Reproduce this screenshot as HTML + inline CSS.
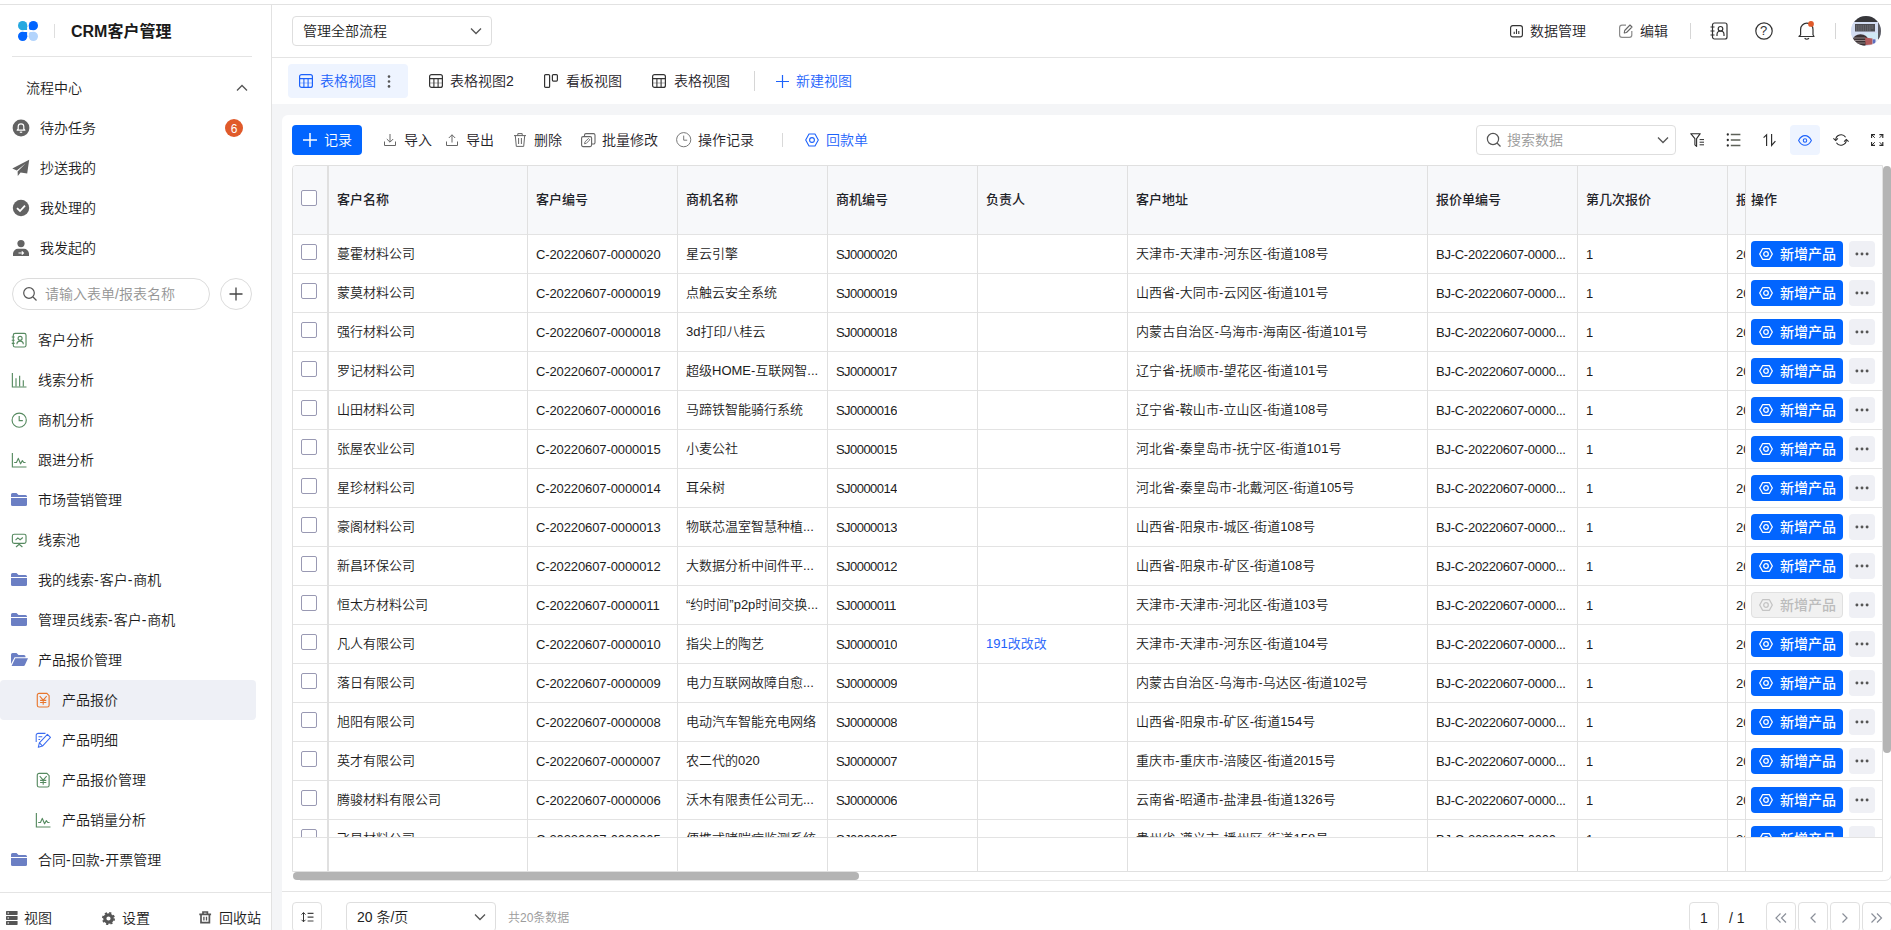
<!DOCTYPE html>
<html lang="zh-CN"><head><meta charset="utf-8"><title>CRM客户管理</title>
<style>
*{box-sizing:border-box;margin:0;padding:0}
html,body{width:1891px;height:930px;overflow:hidden;background:#fff}
body{font-family:"Liberation Sans","Noto Sans CJK SC",sans-serif;font-size:14px;color:#222;font-weight:350;position:relative;-webkit-font-smoothing:antialiased}
.abs{position:absolute}
.t{position:absolute;white-space:nowrap;line-height:20px;height:20px}
svg{position:absolute;overflow:visible}
#topline{left:0;top:4px;width:1891px;height:1px;background:#e2e2e2}
#side{left:0;top:5px;width:272px;height:925px;border-right:1px solid #e2e2e2;background:#fff}
#sidediv{left:12px;top:56px;width:240px;height:1px;background:#e4e4e4}
#hdr{left:272px;top:5px;width:1619px;height:53px;border-bottom:1px solid #e4e4e4;background:#fff}
#main{left:272px;top:104px;width:1619px;height:826px;background:#f4f5f7}
#card{left:282px;top:115px;width:1609px;height:815px;background:#fff;border-radius:6px 0 0 0}
.sel{position:absolute;border:1px solid #dedede;border-radius:4px;background:#fff}
.cb{position:absolute;width:16px;height:16px;border:1px solid #9999b3;border-radius:2px;background:#fff}
.vl{position:absolute;width:1px;background:#e0e0e0}
.hl{position:absolute;height:1px;background:#e3e3e3}
.cell{position:absolute;white-space:nowrap;font-size:13px;line-height:20px;height:20px;color:#1c1c1c;overflow:hidden}
.hc{position:absolute;white-space:nowrap;font-size:13px;line-height:20px;height:20px;color:#1f2329;font-weight:500}
.btn{position:absolute;height:26px;width:92px;background:#0265ff;border-radius:4px;color:#fff;font-size:14px}
.btn.dis{background:#f1f1f1;color:#bcbcbc;border:1px solid #e0e0e0}
.more{position:absolute;width:26px;height:26px;border-radius:4px;background:#eff0f5}
.pg{position:absolute;width:30px;height:30px;border:1px solid #e0e0e0;border-radius:4px;background:#fff}
</style></head>
<body>
<div class="abs" id="topline"></div>
<div class="abs" id="side"></div>
<div class="abs" id="sidediv"></div>
<div class="abs" id="hdr"></div>
<div class="abs" id="main"></div>
<div class="abs" id="card"></div>
<svg style="left:18px;top:21px" width="20" height="20" viewBox="0 0 20 20" ><circle cx="4.65" cy="4.65" r="4.65" fill="#25a8e0"/><rect x="4.65" y="4.65" width="4.45" height="4.45" rx="0.7" fill="#25a8e0"/><circle cx="15.35" cy="4.65" r="4.65" fill="#0265ff"/><rect x="10.9" y="4.65" width="4.45" height="4.45" rx="2" fill="#0265ff"/><circle cx="4.65" cy="15.35" r="4.65" fill="#0265ff"/><rect x="4.65" y="10.9" width="4.45" height="4.45" rx="0.7" fill="#0265ff"/><circle cx="15.35" cy="15.35" r="4.65" fill="#b3d4fc"/><rect x="10.9" y="10.9" width="4.45" height="4.45" rx="1.6" fill="#b3d4fc"/></svg>
<div class="abs" style="left:54px;top:24px;width:1px;height:14px;background:#dedede"></div>
<div class="t" style="left:71px;top:22px;font-size:16px;color:#1a1a1a;font-weight:bold;">CRM客户管理</div>
<div class="t" style="left:26px;top:78px;font-size:14px;color:#1c1c1c;">流程中心</div>
<svg style="left:236px;top:84px" width="12" height="8" viewBox="0 0 12 8" ><path d="M1 6.5 L6 1.5 L11 6.5" fill="none" stroke="#555" stroke-width="1.3"/></svg>
<div class="t" style="left:40px;top:118px;font-size:14px;color:#1c1c1c;">待办任务</div>
<svg style="left:12px;top:119px" width="18" height="18" viewBox="0 0 18 18" ><circle cx="9" cy="9" r="8.4" fill="#636363"/><path d="M5.2 11.2 H12.8 L11.8 10 V7.6 A2.8 2.8 0 0 0 6.2 7.6 V10 Z" fill="none" stroke="#fff" stroke-width="1.2" stroke-linejoin="round"/><path d="M7.8 13.2 H10.2" stroke="#fff" stroke-width="1.2"/></svg>
<div class="t" style="left:40px;top:158px;font-size:14px;color:#1c1c1c;">抄送我的</div>
<svg style="left:12px;top:159px" width="18" height="18" viewBox="0 0 18 18" ><path d="M17.2 0.8 L0.3 9.6 L4.8 11.6 L13.5 4.6 L5.6 12.4 L5.8 17 L8.6 13.4 L15.2 14.6 Z" fill="#636363"/></svg>
<div class="t" style="left:40px;top:198px;font-size:14px;color:#1c1c1c;">我处理的</div>
<svg style="left:12px;top:199px" width="18" height="18" viewBox="0 0 18 18" ><circle cx="9" cy="9" r="8.2" fill="#636363"/><path d="M5 9.2 L8 12 L13 6.6" fill="none" stroke="#fff" stroke-width="1.8"/></svg>
<div class="t" style="left:40px;top:238px;font-size:14px;color:#1c1c1c;">我发起的</div>
<svg style="left:12px;top:239px" width="18" height="18" viewBox="0 0 18 18" ><circle cx="9" cy="4.6" r="3.6" fill="#636363"/><path d="M1 17 V14.5 A5 5 0 0 1 6 9.8 H12 A5 5 0 0 1 17 14.5 V17 Z" fill="#636363"/><path d="M6.5 14 H11.5 M9.8 12.3 L11.5 14 L9.8 15.7" fill="none" stroke="#fff" stroke-width="1.1"/></svg>
<div class="abs" style="left:225px;top:119px;width:18px;height:18px;border-radius:9px;background:#e05a2a;color:#fff;font-size:12px;line-height:20px;text-align:center;font-weight:400">6</div>
<div class="abs" style="left:12px;top:278px;width:198px;height:32px;border:1px solid #dcdcdc;border-radius:16px;background:#fff"></div>
<svg style="left:22px;top:286px" width="16" height="16" viewBox="0 0 16 16" ><circle cx="7" cy="7" r="5.3" fill="none" stroke="#555" stroke-width="1.2"/><path d="M11 11 L14.5 14.5" stroke="#555" stroke-width="1.2"/></svg>
<div class="t" style="left:45px;top:284px;font-size:14px;color:#949494;">请输入表单/报表名称</div>
<div class="abs" style="left:220px;top:278px;width:32px;height:32px;border:1px solid #dcdcdc;border-radius:16px;background:#fff"></div>
<svg style="left:229px;top:287px" width="14" height="14" viewBox="0 0 14 14" ><path d="M7 0.5 V13.5 M0.5 7 H13.5" stroke="#444" stroke-width="1.3"/></svg>
<div class="abs" style="left:0;top:680px;width:256px;height:40px;background:#eef0f6;border-radius:4px"></div>
<div class="t" style="left:38px;top:330px;font-size:14px;color:#1c1c1c;">客户分析</div>
<svg style="left:10.6px;top:331.8px" width="16.4" height="16.4" viewBox="0 0 18 18" ><rect x="2.5" y="1.5" width="14" height="15" rx="2" fill="none" stroke="#568a60" stroke-width="1.25"/><path d="M0.8 5.5 H4 M0.8 9 H4 M0.8 12.5 H4" stroke="#568a60" stroke-width="1.25"/><circle cx="10" cy="7" r="2.2" fill="none" stroke="#568a60" stroke-width="1.25"/><path d="M6.5 13.5 A3.5 3.5 0 0 1 13.5 13.5" fill="none" stroke="#568a60" stroke-width="1.25"/></svg>
<div class="t" style="left:38px;top:370px;font-size:14px;color:#1c1c1c;">线索分析</div>
<svg style="left:10.6px;top:371.8px" width="16.4" height="16.4" viewBox="0 0 18 18" ><path d="M1.5 1 V16.5 H17" fill="none" stroke="#568a60" stroke-width="1.25"/><path d="M5.5 16 V7 M9.5 16 V4 M13.5 16 V9" stroke="#568a60" stroke-width="1.25"/></svg>
<div class="t" style="left:38px;top:410px;font-size:14px;color:#1c1c1c;">商机分析</div>
<svg style="left:10.6px;top:411.8px" width="16.4" height="16.4" viewBox="0 0 18 18" ><circle cx="9" cy="9" r="7.8" fill="none" stroke="#568a60" stroke-width="1.25"/><path d="M9 4.5 V9.5 H13" fill="none" stroke="#568a60" stroke-width="1.25"/></svg>
<div class="t" style="left:38px;top:450px;font-size:14px;color:#1c1c1c;">跟进分析</div>
<svg style="left:10.6px;top:451.8px" width="16.4" height="16.4" viewBox="0 0 18 18" ><path d="M1.5 1 V16.5 H17" fill="none" stroke="#568a60" stroke-width="1.25"/><path d="M3.5 11.5 H6 L8 7 L10.5 13 L12.5 9.5 L14 11.5 H16" fill="none" stroke="#568a60" stroke-width="1.25" stroke-linejoin="round"/></svg>
<div class="t" style="left:38px;top:490px;font-size:14px;color:#1c1c1c;">市场营销管理</div>
<svg style="left:11px;top:493px" width="16" height="13" viewBox="0 0 16 13" ><path d="M0 1.5 A1.5 1.5 0 0 1 1.5 0 H5.5 L7.5 2 H14.5 A1.5 1.5 0 0 1 16 3.5 V4 H0 Z" fill="#6b7fc4"/><path d="M0 5 H16 V11.5 A1.5 1.5 0 0 1 14.5 13 H1.5 A1.5 1.5 0 0 1 0 11.5 Z" fill="#6b7fc4"/></svg>
<div class="t" style="left:38px;top:530px;font-size:14px;color:#1c1c1c;">线索池</div>
<svg style="left:10.6px;top:531.8px" width="16.4" height="16.4" viewBox="0 0 18 18" ><rect x="1.5" y="2.5" width="15" height="10" rx="2" fill="none" stroke="#568a60" stroke-width="1.25"/><path d="M5 9 L7.5 6.5 L10 8.5 L13 6" fill="none" stroke="#568a60" stroke-width="1.25"/><path d="M5.5 16.5 L9 13.5 L12.5 16.5" fill="none" stroke="#568a60" stroke-width="1.25"/></svg>
<div class="t" style="left:38px;top:570px;font-size:14px;color:#1c1c1c;">我的线索<span style="letter-spacing:1px">-</span>客户<span style="letter-spacing:1px">-</span>商机</div>
<svg style="left:11px;top:573px" width="16" height="13" viewBox="0 0 16 13" ><path d="M0 1.5 A1.5 1.5 0 0 1 1.5 0 H5.5 L7.5 2 H14.5 A1.5 1.5 0 0 1 16 3.5 V4 H0 Z" fill="#6b7fc4"/><path d="M0 5 H16 V11.5 A1.5 1.5 0 0 1 14.5 13 H1.5 A1.5 1.5 0 0 1 0 11.5 Z" fill="#6b7fc4"/></svg>
<div class="t" style="left:38px;top:610px;font-size:14px;color:#1c1c1c;">管理员线索<span style="letter-spacing:1px">-</span>客户<span style="letter-spacing:1px">-</span>商机</div>
<svg style="left:11px;top:613px" width="16" height="13" viewBox="0 0 16 13" ><path d="M0 1.5 A1.5 1.5 0 0 1 1.5 0 H5.5 L7.5 2 H14.5 A1.5 1.5 0 0 1 16 3.5 V4 H0 Z" fill="#6b7fc4"/><path d="M0 5 H16 V11.5 A1.5 1.5 0 0 1 14.5 13 H1.5 A1.5 1.5 0 0 1 0 11.5 Z" fill="#6b7fc4"/></svg>
<div class="t" style="left:38px;top:650px;font-size:14px;color:#1c1c1c;">产品报价管理</div>
<svg style="left:11px;top:653px" width="17" height="13" viewBox="0 0 17 13" ><path d="M0 1.5 A1.5 1.5 0 0 1 1.5 0 H5.5 L7.5 2 H13 A1.5 1.5 0 0 1 14.5 3.5 V4.2 H3.6 L0 11 Z" fill="#6b7fc4"/><path d="M4.2 5.2 H17 L13.8 12.2 A1.3 1.3 0 0 1 12.6 13 H0.6 Z" fill="#6b7fc4"/></svg>
<div class="t" style="left:62px;top:690px;font-size:14px;color:#1c1c1c;">产品报价</div>
<svg style="left:34.6px;top:691.8px" width="16.4" height="16.4" viewBox="0 0 18 18" ><path d="M2.5 3.5 A2 2 0 0 1 4.5 1.5 H13 L15.5 4 V14.5 A2 2 0 0 1 13.5 16.5 H4.5 A2 2 0 0 1 2.5 14.5 Z" fill="none" stroke="#e8762d" stroke-width="1.25"/><path d="M5.2 4.6 L9 9 L12.8 4.6 M9 9 V14 M5.6 9.2 H12.4 M5.6 11.6 H12.4" fill="none" stroke="#e8762d" stroke-width="1.15"/></svg>
<div class="t" style="left:62px;top:730px;font-size:14px;color:#1c1c1c;">产品明细</div>
<svg style="left:34.6px;top:731.8px" width="16.4" height="16.4" viewBox="0 0 18 18" ><path d="M11.5 1.5 H3.5 A2.2 2.2 0 0 0 1.3 3.7 V11" fill="none" stroke="#3b6cf0" stroke-width="1.15"/><path d="M3.8 5.2 H8 M3.8 8.2 H5.6" stroke="#3b6cf0" stroke-width="1.15"/><path d="M13.6 2.6 L17 6 L8.2 15.4 L3.6 16.8 L4.8 12 Z M5 12 L8 15.2" fill="none" stroke="#3b6cf0" stroke-width="1.15" stroke-linejoin="round"/></svg>
<div class="t" style="left:62px;top:770px;font-size:14px;color:#1c1c1c;">产品报价管理</div>
<svg style="left:34.6px;top:771.8px" width="16.4" height="16.4" viewBox="0 0 18 18" ><path d="M2.5 3.5 A2 2 0 0 1 4.5 1.5 H13 L15.5 4 V14.5 A2 2 0 0 1 13.5 16.5 H4.5 A2 2 0 0 1 2.5 14.5 Z" fill="none" stroke="#568a60" stroke-width="1.25"/><path d="M5.2 4.6 L9 9 L12.8 4.6 M9 9 V14 M5.6 9.2 H12.4 M5.6 11.6 H12.4" fill="none" stroke="#568a60" stroke-width="1.15"/></svg>
<div class="t" style="left:62px;top:810px;font-size:14px;color:#1c1c1c;">产品销量分析</div>
<svg style="left:34.6px;top:811.8px" width="16.4" height="16.4" viewBox="0 0 18 18" ><path d="M1.5 1 V16.5 H17" fill="none" stroke="#568a60" stroke-width="1.25"/><path d="M3.5 11.5 H6 L8 7 L10.5 13 L12.5 9.5 L14 11.5 H16" fill="none" stroke="#568a60" stroke-width="1.25" stroke-linejoin="round"/></svg>
<div class="t" style="left:38px;top:850px;font-size:14px;color:#1c1c1c;">合同<span style="letter-spacing:1px">-</span>回款<span style="letter-spacing:1px">-</span>开票管理</div>
<svg style="left:11px;top:853px" width="16" height="13" viewBox="0 0 16 13" ><path d="M0 1.5 A1.5 1.5 0 0 1 1.5 0 H5.5 L7.5 2 H14.5 A1.5 1.5 0 0 1 16 3.5 V4 H0 Z" fill="#6b7fc4"/><path d="M0 5 H16 V11.5 A1.5 1.5 0 0 1 14.5 13 H1.5 A1.5 1.5 0 0 1 0 11.5 Z" fill="#6b7fc4"/></svg>
<div class="abs" style="left:0;top:892px;width:271px;height:1px;background:#e4e4e4"></div>
<div class="t" style="left:24px;top:908px;font-size:14px;color:#1c1c1c;">视图</div>
<div class="t" style="left:122px;top:908px;font-size:14px;color:#1c1c1c;">设置</div>
<div class="t" style="left:219px;top:908px;font-size:14px;color:#1c1c1c;">回收站</div>
<svg style="left:5.5px;top:911px" width="11.6" height="14" viewBox="0 0 11.6 14" ><rect x="0" y="0" width="11.6" height="3.9" rx="0.6" fill="#555"/><rect x="0" y="5" width="11.6" height="3.9" rx="0.6" fill="#555"/><rect x="0" y="10" width="11.6" height="3.9" rx="0.6" fill="#555"/><circle cx="2.2" cy="1.95" r="0.7" fill="#fff"/><circle cx="2.2" cy="6.95" r="0.7" fill="#fff"/><circle cx="2.2" cy="11.95" r="0.7" fill="#fff"/></svg>
<svg style="left:101.8px;top:911.6px" width="13" height="13" viewBox="0 0 13 13" ><circle cx="6.5" cy="6.5" r="3.7" fill="none" stroke="#555" stroke-width="3.2"/><circle cx="6.5" cy="6.5" r="5.6" fill="none" stroke="#555" stroke-width="1.8" stroke-dasharray="2.2 2.2"/></svg>
<svg style="left:199px;top:911.4px" width="12.4" height="12.6" viewBox="0 0 12.4 12.6" ><path d="M0.3 3.4 H12.1 M4 3.2 V1 H8.4 V3.2 M2 3.6 V11.6 H10.4 V3.6" fill="none" stroke="#555" stroke-width="1.7"/><path d="M4.9 5.8 V9.6 M7.5 5.8 V9.6" stroke="#555" stroke-width="1.3"/></svg>
<div class="sel" style="left:292px;top:16px;width:200px;height:30px"></div>
<div class="t" style="left:303px;top:21px;font-size:14px;color:#1c1c1c;">管理全部流程</div>
<svg style="left:470px;top:27px" width="12" height="8" viewBox="0 0 12 8" ><path d="M1 1.5 L6 6.5 L11 1.5" fill="none" stroke="#555" stroke-width="1.3"/></svg>
<svg style="left:1509.5px;top:24.5px" width="13" height="12.5" viewBox="0 0 13 12.5" ><rect x="0.6" y="0.6" width="11.8" height="11.3" rx="2.2" fill="none" stroke="#333" stroke-width="1.15"/><path d="M4.2 9 V6.8 M6.5 9 V4 M8.8 9 V6" stroke="#333" stroke-width="1.1"/></svg>
<div class="t" style="left:1530px;top:21px;font-size:14px;color:#1f2329;">数据管理</div>
<svg style="left:1619px;top:24px" width="14" height="14" viewBox="0 0 14 14" ><path d="M7 1.2 H3 A2.4 2.4 0 0 0 0.6 3.6 V11 A2.4 2.4 0 0 0 3 13.4 H10.4 A2.4 2.4 0 0 0 12.8 11 V7" fill="none" stroke="#8b8b8b" stroke-width="1.2"/><path d="M11 1 L13 3 L7.5 8.5 L5.2 9 L5.7 6.5 Z" fill="none" stroke="#666" stroke-width="1.1" stroke-linejoin="round"/></svg>
<div class="t" style="left:1640px;top:21px;font-size:14px;color:#1f2329;">编辑</div>
<div class="abs" style="left:1690px;top:23px;width:1px;height:16px;background:#d6d6d6"></div>
<svg style="left:1710px;top:22px" width="18" height="18" viewBox="0 0 18 18" ><rect x="2.5" y="1" width="14.5" height="16" rx="2" fill="none" stroke="#333" stroke-width="1.2"/><path d="M0.5 5 H4.5 M0.5 9 H4.5 M0.5 13 H4.5" stroke="#333" stroke-width="1.2"/><circle cx="10.5" cy="6.8" r="2.3" fill="none" stroke="#333" stroke-width="1.2"/><path d="M7 14 V12.5 A3.5 3.5 0 0 1 14 12.5 V14" fill="none" stroke="#333" stroke-width="1.2"/></svg>
<svg style="left:1755px;top:22px" width="18" height="18" viewBox="0 0 18 18" ><circle cx="9" cy="9" r="8.2" fill="none" stroke="#333" stroke-width="1.2"/></svg>
<div class="t" style="left:1760px;top:21px;font-size:13px;color:#333;">?</div>
<svg style="left:1797px;top:21px" width="19" height="20" viewBox="0 0 19 20" ><path d="M2 15.5 H17 L16 13.8 V8.4 A6.2 6.2 0 0 0 3.6 8.4 V13.8 Z" fill="none" stroke="#333" stroke-width="1.2" stroke-linejoin="round"/><path d="M7.6 17.3 Q9.8 19.2 12 17.3" fill="none" stroke="#333" stroke-width="1.2"/><circle cx="14" cy="2.9" r="2.9" fill="#e05a2a"/></svg>
<div class="abs" style="left:1835px;top:23px;width:1px;height:16px;background:#d6d6d6"></div>
<svg style="left:1851px;top:16px" width="30" height="30" viewBox="0 0 30 30" ><defs><clipPath id="av"><circle cx="15" cy="15" r="15"/></clipPath></defs><g clip-path="url(#av)"><rect width="30" height="30" fill="#d6def0"/><rect x="0" y="0" width="30" height="6" fill="#37373a"/><rect x="27" y="6" width="3" height="18" fill="#5a5a60"/><rect x="0" y="6" width="27" height="17" fill="#d3ddf2"/><rect x="14" y="17" width="13" height="6" fill="#d0e8f4"/><rect x="4" y="8" width="20" height="7.5" fill="#4b4b50"/><path d="M5 10 H23 M5 12 H23 M5 14 H20" stroke="#8a8a92" stroke-width="0.8" stroke-dasharray="1.4 0.8"/><rect x="17" y="23" width="13" height="7" fill="#eef0f6"/><ellipse cx="9.5" cy="24.5" rx="7.8" ry="6.2" fill="#3b3234"/><path d="M3 22 H14 M2.5 24.5 H15 M4 27 H14" stroke="#9a8f90" stroke-width="0.9"/><path d="M14 21.5 L21.5 22.5 L21.5 28.5 L14.5 29 Z" fill="#b25a5c"/><rect x="21.7" y="23.3" width="2.8" height="4.4" fill="#5b6dc0"/></g></svg>
<div class="abs" style="left:288px;top:64px;width:120px;height:34px;background:#eef4ff;border-radius:4px"></div>
<svg style="left:299px;top:74px" width="14" height="14" viewBox="0 0 14 14" ><rect x="0.6" y="0.6" width="12.8" height="12.8" rx="2" fill="none" stroke="#1c62fb" stroke-width="1.2"/><path d="M0.6 4.6 H13.4 M4.9 4.6 V13.4 M9.1 4.6 V13.4" stroke="#1c62fb" stroke-width="1.1" fill="none"/><path d="M0.6 9 H13.4" stroke="#1c62fb" stroke-width="1" opacity="0.4"/></svg>
<div class="t" style="left:320px;top:71px;font-size:14px;color:#1c62fb;">表格视图</div>
<svg style="left:387px;top:75px" width="4" height="13" viewBox="0 0 4 13" ><circle cx="2" cy="1.6" r="1.3" fill="#555"/><circle cx="2" cy="6.5" r="1.3" fill="#555"/><circle cx="2" cy="11.4" r="1.3" fill="#555"/></svg>
<svg style="left:429px;top:74px" width="14" height="14" viewBox="0 0 14 14" ><rect x="0.6" y="0.6" width="12.8" height="12.8" rx="2" fill="none" stroke="#333" stroke-width="1.2"/><path d="M0.6 4.6 H13.4 M4.9 4.6 V13.4 M9.1 4.6 V13.4" stroke="#333" stroke-width="1.1" fill="none"/><path d="M0.6 9 H13.4" stroke="#333" stroke-width="1" opacity="0.4"/></svg>
<div class="t" style="left:450px;top:71px;font-size:14px;color:#1f2329;">表格视图2</div>
<svg style="left:544px;top:74px" width="14" height="14" viewBox="0 0 14 14" ><rect x="0.6" y="0.6" width="5" height="12.8" rx="1" fill="none" stroke="#333" stroke-width="1.2"/><rect x="8.4" y="0.6" width="5" height="6.5" rx="1" fill="none" stroke="#333" stroke-width="1.2"/></svg>
<div class="t" style="left:566px;top:71px;font-size:14px;color:#1f2329;">看板视图</div>
<svg style="left:652px;top:74px" width="14" height="14" viewBox="0 0 14 14" ><rect x="0.6" y="0.6" width="12.8" height="12.8" rx="2" fill="none" stroke="#333" stroke-width="1.2"/><path d="M0.6 4.6 H13.4 M4.9 4.6 V13.4 M9.1 4.6 V13.4" stroke="#333" stroke-width="1.1" fill="none"/><path d="M0.6 9 H13.4" stroke="#333" stroke-width="1" opacity="0.4"/></svg>
<div class="t" style="left:674px;top:71px;font-size:14px;color:#1f2329;">表格视图</div>
<div class="abs" style="left:754px;top:71px;width:1px;height:20px;background:#d6d6d6"></div>
<svg style="left:776px;top:74.5px" width="13" height="13" viewBox="0 0 13 13" ><path d="M6.5 0 V13 M0 6.5 H13" stroke="#1c62fb" stroke-width="1.2"/></svg>
<div class="t" style="left:796px;top:71px;font-size:14px;color:#1c62fb;">新建视图</div>
<div class="abs" style="left:292px;top:125px;width:70px;height:30px;background:#0265ff;border-radius:4px"></div>
<svg style="left:303px;top:133px" width="14" height="14" viewBox="0 0 14 14" ><path d="M7 0 V14 M0 7 H14" stroke="#fff" stroke-width="1.5"/></svg>
<div class="t" style="left:324px;top:130px;font-size:14px;color:#fff;">记录</div>
<svg style="left:384px;top:134px" width="12" height="12" viewBox="0 0 12 12" ><path d="M6 0 V8 M2.8 5 L6 8.2 L9.2 5" fill="none" stroke="#666" stroke-width="1"/><path d="M0.5 7.5 V11.5 H11.5 V7.5" fill="none" stroke="#666" stroke-width="1"/></svg>
<div class="t" style="left:404px;top:130px;font-size:14px;color:#1f2329;">导入</div>
<svg style="left:446px;top:134px" width="12" height="12" viewBox="0 0 12 12" ><path d="M6 8.5 V0.8 M2.8 4 L6 0.8 L9.2 4" fill="none" stroke="#666" stroke-width="1"/><path d="M0.5 7.5 V11.5 H11.5 V7.5" fill="none" stroke="#666" stroke-width="1"/></svg>
<div class="t" style="left:466px;top:130px;font-size:14px;color:#1f2329;">导出</div>
<svg style="left:514px;top:133px" width="12" height="14" viewBox="0 0 12 14" ><path d="M0 2.6 H12 M3.8 2.6 V0.6 H8.2 V2.6 M1.3 2.6 L2.3 13.4 H9.7 L10.7 2.6 M4.6 5 V11 M7.4 5 V11" fill="none" stroke="#666" stroke-width="1"/></svg>
<div class="t" style="left:534px;top:130px;font-size:14px;color:#1f2329;">删除</div>
<svg style="left:581px;top:133px" width="15" height="14" viewBox="0 0 15 14" ><rect x="0.6" y="3.6" width="10" height="10" rx="1.5" fill="none" stroke="#666" stroke-width="1.1"/><path d="M3.5 3.5 V2 A1.5 1.5 0 0 1 5 0.6 H12.5 A1.5 1.5 0 0 1 14 2 V9.5 A1.5 1.5 0 0 1 12.5 11 H10.8" fill="none" stroke="#666" stroke-width="1.1"/><path d="M3.5 10.8 L4 8.8 L7.5 5.5 L8.8 6.8 L5.4 10.3 Z" fill="none" stroke="#666" stroke-width="0.9"/></svg>
<div class="t" style="left:602px;top:130px;font-size:14px;color:#1f2329;">批量修改</div>
<svg style="left:676.3px;top:132.3px" width="15.4" height="15.4" viewBox="0 0 15.4 15.4" ><circle cx="7.7" cy="7.7" r="7.1" fill="none" stroke="#777" stroke-width="1"/><path d="M7.7 3.6 V8.2 H11.2" fill="none" stroke="#777" stroke-width="1"/></svg>
<div class="t" style="left:698px;top:130px;font-size:14px;color:#1f2329;">操作记录</div>
<div class="abs" style="left:782px;top:133px;width:1px;height:14px;background:#d9d9d9"></div>
<svg style="left:805px;top:133px" width="14" height="14" viewBox="0 0 14 14" ><path d="M4 1 H10 L13.3 7 L10 13 H4 L0.7 7 Z" fill="none" stroke="#1c62fb" stroke-width="1.1" stroke-linejoin="round"/><circle cx="7" cy="7" r="2.4" fill="none" stroke="#1c62fb" stroke-width="1.1"/></svg>
<div class="t" style="left:826px;top:130px;font-size:14px;color:#1c62fb;">回款单</div>
<div class="sel" style="left:1476px;top:125px;width:200px;height:30px"></div>
<svg style="left:1486px;top:132px" width="16" height="16" viewBox="0 0 16 16" ><circle cx="7" cy="7" r="5.6" fill="none" stroke="#555" stroke-width="1.2"/><path d="M11 11 L14.5 14.5" stroke="#555" stroke-width="1.2"/></svg>
<div class="t" style="left:1507px;top:130px;font-size:14px;color:#999;">搜索数据</div>
<svg style="left:1657px;top:136px" width="12" height="8" viewBox="0 0 12 8" ><path d="M1 1.5 L6 6.5 L11 1.5" fill="none" stroke="#555" stroke-width="1.3"/></svg>
<svg style="left:1690px;top:133px" width="15" height="14" viewBox="0 0 15 14" ><path d="M0.3 0.7 H10.7 M1 0.9 L4.9 5.6 V11.8 L6.6 13.4 V5.6 L10 0.9" fill="none" stroke="#2b2b2b" stroke-width="1.1" stroke-linejoin="round"/><path d="M9.6 6.6 H14 M9.6 9.2 H14 M9.6 11.8 H14" stroke="#2b2b2b" stroke-width="1"/></svg>
<svg style="left:1726px;top:133px" width="15" height="14" viewBox="0 0 15 14" ><path d="M4.8 1.5 H14.4 M4.8 7 H14.4 M4.8 12.5 H14.4" stroke="#5d6158" stroke-width="1.5"/><circle cx="1.8" cy="1.5" r="1.15" fill="#2b2b2b"/><circle cx="1.8" cy="7" r="1.15" fill="#2b2b2b"/><circle cx="1.8" cy="12.5" r="1.15" fill="#2b2b2b"/></svg>
<svg style="left:1763px;top:134px" width="13" height="12" viewBox="0 0 13 12" ><path d="M0.6 3.6 L3.6 0.8 V12 M8.6 0 V11.4 L12.4 7.2" fill="none" stroke="#2b2b2b" stroke-width="1.15"/></svg>
<div class="abs" style="left:1790px;top:125px;width:30px;height:30px;background:#eef4ff;border-radius:4px"></div>
<svg style="left:1798px;top:134.5px" width="14" height="11" viewBox="0 0 14 11" ><path d="M0.6 5.4 C2.6 1.6 5.2 0.6 7 0.6 C8.8 0.6 11.4 1.6 13.4 5.4 C11.4 9.2 8.8 10.2 7 10.2 C5.2 10.2 2.6 9.2 0.6 5.4 Z" fill="none" stroke="#1c62fb" stroke-width="1.05"/><circle cx="7" cy="5.4" r="1.7" fill="none" stroke="#1c62fb" stroke-width="1.05"/></svg>
<svg style="left:1833px;top:132px" width="16" height="16" viewBox="0 0 16 16" ><path d="M2.7 8.2 A5.4 5.4 0 0 1 12.6 5.2 M13.3 7.8 A5.4 5.4 0 0 1 3.4 10.8" fill="none" stroke="#2b2b2b" stroke-width="1.1"/><path d="M0.4 6.4 L2.7 8.6 L4.9 6.4 M11.1 9.6 L13.3 7.4 L15.6 9.6" fill="none" stroke="#2b2b2b" stroke-width="1.1"/></svg>
<svg style="left:1871px;top:134px" width="12.4" height="12" viewBox="0 0 12.4 12" ><path d="M0.6 4 V0.6 H4 M8.4 0.6 H11.8 V4 M11.8 8 V11.4 H8.4 M4 11.4 H0.6 V8" fill="none" stroke="#2b2b2b" stroke-width="1.15"/><path d="M0.6 0.6 L3.8 3.8 M11.8 0.6 L8.6 3.8 M11.8 11.4 L8.6 8.2 M0.6 11.4 L3.8 8.2" stroke="#2b2b2b" stroke-width="1"/></svg>
<div class="abs" style="left:292px;top:165px;width:1591px;height:707px;border:1px solid #e0e0e0;border-radius:4px 0 0 0;overflow:hidden">
<div class="abs" style="left:0;top:0;width:1600px;height:68px;background:#f7f8fa"></div>
<div class="hl" style="left:0;top:68px;width:1600px"></div>
<div class="hc" style="left:44px;top:24px">客户名称</div>
<div class="hc" style="left:243px;top:24px">客户编号</div>
<div class="hc" style="left:393px;top:24px">商机名称</div>
<div class="hc" style="left:543px;top:24px">商机编号</div>
<div class="hc" style="left:693px;top:24px">负责人</div>
<div class="hc" style="left:843px;top:24px">客户地址</div>
<div class="hc" style="left:1143px;top:24px">报价单编号</div>
<div class="hc" style="left:1293px;top:24px">第几次报价</div>
<div class="hc" style="left:1443px;top:24px">报</div>
<div class="cb" style="left:8px;top:24px"></div>
<div class="abs" style="left:0;top:69px;width:1600px;height:602px;overflow:hidden">
<div class="hl" style="left:0;top:38px;width:1600px"></div>
<div class="cb" style="left:8px;top:9px"></div>
<div class="cell" style="left:44px;top:9px;">蔓霍材料公司</div>
<div class="cell" style="left:243px;top:10px;letter-spacing:-0.11px;">C-20220607-0000020</div>
<div class="cell" style="left:393px;top:9px;">星云引擎</div>
<div class="cell" style="left:543px;top:10px;letter-spacing:-0.55px;">SJ0000020</div>
<div class="cell" style="left:843px;top:9px;letter-spacing:0.1px;">天津市-天津市-河东区-街道108号</div>
<div class="cell" style="left:1143px;top:10px;letter-spacing:-0.26px;">BJ-C-20220607-0000...</div>
<div class="cell" style="left:1293px;top:10px;">1</div>
<div class="cell" style="left:1443px;top:10px;">20</div>
<div class="hl" style="left:0;top:77px;width:1600px"></div>
<div class="cb" style="left:8px;top:48px"></div>
<div class="cell" style="left:44px;top:48px;">蒙莫材料公司</div>
<div class="cell" style="left:243px;top:49px;letter-spacing:-0.11px;">C-20220607-0000019</div>
<div class="cell" style="left:393px;top:48px;">点触云安全系统</div>
<div class="cell" style="left:543px;top:49px;letter-spacing:-0.55px;">SJ0000019</div>
<div class="cell" style="left:843px;top:48px;letter-spacing:0.1px;">山西省-大同市-云冈区-街道101号</div>
<div class="cell" style="left:1143px;top:49px;letter-spacing:-0.26px;">BJ-C-20220607-0000...</div>
<div class="cell" style="left:1293px;top:49px;">1</div>
<div class="cell" style="left:1443px;top:49px;">20</div>
<div class="hl" style="left:0;top:116px;width:1600px"></div>
<div class="cb" style="left:8px;top:87px"></div>
<div class="cell" style="left:44px;top:87px;">强行材料公司</div>
<div class="cell" style="left:243px;top:88px;letter-spacing:-0.11px;">C-20220607-0000018</div>
<div class="cell" style="left:393px;top:87px;">3d打印八桂云</div>
<div class="cell" style="left:543px;top:88px;letter-spacing:-0.55px;">SJ0000018</div>
<div class="cell" style="left:843px;top:87px;letter-spacing:0.1px;">内蒙古自治区-乌海市-海南区-街道101号</div>
<div class="cell" style="left:1143px;top:88px;letter-spacing:-0.26px;">BJ-C-20220607-0000...</div>
<div class="cell" style="left:1293px;top:88px;">1</div>
<div class="cell" style="left:1443px;top:88px;">20</div>
<div class="hl" style="left:0;top:155px;width:1600px"></div>
<div class="cb" style="left:8px;top:126px"></div>
<div class="cell" style="left:44px;top:126px;">罗记材料公司</div>
<div class="cell" style="left:243px;top:127px;letter-spacing:-0.11px;">C-20220607-0000017</div>
<div class="cell" style="left:393px;top:126px;">超级HOME-互联网智...</div>
<div class="cell" style="left:543px;top:127px;letter-spacing:-0.55px;">SJ0000017</div>
<div class="cell" style="left:843px;top:126px;letter-spacing:0.1px;">辽宁省-抚顺市-望花区-街道101号</div>
<div class="cell" style="left:1143px;top:127px;letter-spacing:-0.26px;">BJ-C-20220607-0000...</div>
<div class="cell" style="left:1293px;top:127px;">1</div>
<div class="cell" style="left:1443px;top:127px;">20</div>
<div class="hl" style="left:0;top:194px;width:1600px"></div>
<div class="cb" style="left:8px;top:165px"></div>
<div class="cell" style="left:44px;top:165px;">山田材料公司</div>
<div class="cell" style="left:243px;top:166px;letter-spacing:-0.11px;">C-20220607-0000016</div>
<div class="cell" style="left:393px;top:165px;">马蹄铁智能骑行系统</div>
<div class="cell" style="left:543px;top:166px;letter-spacing:-0.55px;">SJ0000016</div>
<div class="cell" style="left:843px;top:165px;letter-spacing:0.1px;">辽宁省-鞍山市-立山区-街道108号</div>
<div class="cell" style="left:1143px;top:166px;letter-spacing:-0.26px;">BJ-C-20220607-0000...</div>
<div class="cell" style="left:1293px;top:166px;">1</div>
<div class="cell" style="left:1443px;top:166px;">20</div>
<div class="hl" style="left:0;top:233px;width:1600px"></div>
<div class="cb" style="left:8px;top:204px"></div>
<div class="cell" style="left:44px;top:204px;">张屋农业公司</div>
<div class="cell" style="left:243px;top:205px;letter-spacing:-0.11px;">C-20220607-0000015</div>
<div class="cell" style="left:393px;top:204px;">小麦公社</div>
<div class="cell" style="left:543px;top:205px;letter-spacing:-0.55px;">SJ0000015</div>
<div class="cell" style="left:843px;top:204px;letter-spacing:0.1px;">河北省-秦皇岛市-抚宁区-街道101号</div>
<div class="cell" style="left:1143px;top:205px;letter-spacing:-0.26px;">BJ-C-20220607-0000...</div>
<div class="cell" style="left:1293px;top:205px;">1</div>
<div class="cell" style="left:1443px;top:205px;">20</div>
<div class="hl" style="left:0;top:272px;width:1600px"></div>
<div class="cb" style="left:8px;top:243px"></div>
<div class="cell" style="left:44px;top:243px;">星珍材料公司</div>
<div class="cell" style="left:243px;top:244px;letter-spacing:-0.11px;">C-20220607-0000014</div>
<div class="cell" style="left:393px;top:243px;">耳朵树</div>
<div class="cell" style="left:543px;top:244px;letter-spacing:-0.55px;">SJ0000014</div>
<div class="cell" style="left:843px;top:243px;letter-spacing:0.1px;">河北省-秦皇岛市-北戴河区-街道105号</div>
<div class="cell" style="left:1143px;top:244px;letter-spacing:-0.26px;">BJ-C-20220607-0000...</div>
<div class="cell" style="left:1293px;top:244px;">1</div>
<div class="cell" style="left:1443px;top:244px;">20</div>
<div class="hl" style="left:0;top:311px;width:1600px"></div>
<div class="cb" style="left:8px;top:282px"></div>
<div class="cell" style="left:44px;top:282px;">豪阁材料公司</div>
<div class="cell" style="left:243px;top:283px;letter-spacing:-0.11px;">C-20220607-0000013</div>
<div class="cell" style="left:393px;top:282px;">物联芯温室智慧种植...</div>
<div class="cell" style="left:543px;top:283px;letter-spacing:-0.55px;">SJ0000013</div>
<div class="cell" style="left:843px;top:282px;letter-spacing:0.1px;">山西省-阳泉市-城区-街道108号</div>
<div class="cell" style="left:1143px;top:283px;letter-spacing:-0.26px;">BJ-C-20220607-0000...</div>
<div class="cell" style="left:1293px;top:283px;">1</div>
<div class="cell" style="left:1443px;top:283px;">20</div>
<div class="hl" style="left:0;top:350px;width:1600px"></div>
<div class="cb" style="left:8px;top:321px"></div>
<div class="cell" style="left:44px;top:321px;">新昌环保公司</div>
<div class="cell" style="left:243px;top:322px;letter-spacing:-0.11px;">C-20220607-0000012</div>
<div class="cell" style="left:393px;top:321px;">大数据分析中间件平...</div>
<div class="cell" style="left:543px;top:322px;letter-spacing:-0.55px;">SJ0000012</div>
<div class="cell" style="left:843px;top:321px;letter-spacing:0.1px;">山西省-阳泉市-矿区-街道108号</div>
<div class="cell" style="left:1143px;top:322px;letter-spacing:-0.26px;">BJ-C-20220607-0000...</div>
<div class="cell" style="left:1293px;top:322px;">1</div>
<div class="cell" style="left:1443px;top:322px;">20</div>
<div class="hl" style="left:0;top:389px;width:1600px"></div>
<div class="cb" style="left:8px;top:360px"></div>
<div class="cell" style="left:44px;top:360px;">恒太方材料公司</div>
<div class="cell" style="left:243px;top:361px;letter-spacing:-0.11px;">C-20220607-0000011</div>
<div class="cell" style="left:393px;top:360px;">“约时间”p2p时间交换...</div>
<div class="cell" style="left:543px;top:361px;letter-spacing:-0.55px;">SJ0000011</div>
<div class="cell" style="left:843px;top:360px;letter-spacing:0.1px;">天津市-天津市-河北区-街道103号</div>
<div class="cell" style="left:1143px;top:361px;letter-spacing:-0.26px;">BJ-C-20220607-0000...</div>
<div class="cell" style="left:1293px;top:361px;">1</div>
<div class="cell" style="left:1443px;top:361px;">20</div>
<div class="hl" style="left:0;top:428px;width:1600px"></div>
<div class="cb" style="left:8px;top:399px"></div>
<div class="cell" style="left:44px;top:399px;">凡人有限公司</div>
<div class="cell" style="left:243px;top:400px;letter-spacing:-0.11px;">C-20220607-0000010</div>
<div class="cell" style="left:393px;top:399px;">指尖上的陶艺</div>
<div class="cell" style="left:543px;top:400px;letter-spacing:-0.55px;">SJ0000010</div>
<div class="cell" style="left:693px;top:399px;color:#1c62fb;">191改改改</div>
<div class="cell" style="left:843px;top:399px;letter-spacing:0.1px;">天津市-天津市-河东区-街道104号</div>
<div class="cell" style="left:1143px;top:400px;letter-spacing:-0.26px;">BJ-C-20220607-0000...</div>
<div class="cell" style="left:1293px;top:400px;">1</div>
<div class="cell" style="left:1443px;top:400px;">20</div>
<div class="hl" style="left:0;top:467px;width:1600px"></div>
<div class="cb" style="left:8px;top:438px"></div>
<div class="cell" style="left:44px;top:438px;">落日有限公司</div>
<div class="cell" style="left:243px;top:439px;letter-spacing:-0.11px;">C-20220607-0000009</div>
<div class="cell" style="left:393px;top:438px;">电力互联网故障自愈...</div>
<div class="cell" style="left:543px;top:439px;letter-spacing:-0.55px;">SJ0000009</div>
<div class="cell" style="left:843px;top:438px;letter-spacing:0.1px;">内蒙古自治区-乌海市-乌达区-街道102号</div>
<div class="cell" style="left:1143px;top:439px;letter-spacing:-0.26px;">BJ-C-20220607-0000...</div>
<div class="cell" style="left:1293px;top:439px;">1</div>
<div class="cell" style="left:1443px;top:439px;">20</div>
<div class="hl" style="left:0;top:506px;width:1600px"></div>
<div class="cb" style="left:8px;top:477px"></div>
<div class="cell" style="left:44px;top:477px;">旭阳有限公司</div>
<div class="cell" style="left:243px;top:478px;letter-spacing:-0.11px;">C-20220607-0000008</div>
<div class="cell" style="left:393px;top:477px;">电动汽车智能充电网络</div>
<div class="cell" style="left:543px;top:478px;letter-spacing:-0.55px;">SJ0000008</div>
<div class="cell" style="left:843px;top:477px;letter-spacing:0.1px;">山西省-阳泉市-矿区-街道154号</div>
<div class="cell" style="left:1143px;top:478px;letter-spacing:-0.26px;">BJ-C-20220607-0000...</div>
<div class="cell" style="left:1293px;top:478px;">1</div>
<div class="cell" style="left:1443px;top:478px;">20</div>
<div class="hl" style="left:0;top:545px;width:1600px"></div>
<div class="cb" style="left:8px;top:516px"></div>
<div class="cell" style="left:44px;top:516px;">英才有限公司</div>
<div class="cell" style="left:243px;top:517px;letter-spacing:-0.11px;">C-20220607-0000007</div>
<div class="cell" style="left:393px;top:516px;">农二代的020</div>
<div class="cell" style="left:543px;top:517px;letter-spacing:-0.55px;">SJ0000007</div>
<div class="cell" style="left:843px;top:516px;letter-spacing:0.1px;">重庆市-重庆市-涪陵区-街道2015号</div>
<div class="cell" style="left:1143px;top:517px;letter-spacing:-0.26px;">BJ-C-20220607-0000...</div>
<div class="cell" style="left:1293px;top:517px;">1</div>
<div class="cell" style="left:1443px;top:517px;">20</div>
<div class="hl" style="left:0;top:584px;width:1600px"></div>
<div class="cb" style="left:8px;top:555px"></div>
<div class="cell" style="left:44px;top:555px;">腾骏材料有限公司</div>
<div class="cell" style="left:243px;top:556px;letter-spacing:-0.11px;">C-20220607-0000006</div>
<div class="cell" style="left:393px;top:555px;">沃木有限责任公司无...</div>
<div class="cell" style="left:543px;top:556px;letter-spacing:-0.55px;">SJ0000006</div>
<div class="cell" style="left:843px;top:555px;letter-spacing:0.1px;">云南省-昭通市-盐津县-街道1326号</div>
<div class="cell" style="left:1143px;top:556px;letter-spacing:-0.26px;">BJ-C-20220607-0000...</div>
<div class="cell" style="left:1293px;top:556px;">1</div>
<div class="cell" style="left:1443px;top:556px;">20</div>
<div class="hl" style="left:0;top:623px;width:1600px"></div>
<div class="cb" style="left:8px;top:594px"></div>
<div class="cell" style="left:44px;top:594px;">飞星材料公司</div>
<div class="cell" style="left:243px;top:595px;letter-spacing:-0.11px;">C-20220607-0000005</div>
<div class="cell" style="left:393px;top:594px;">便携式哮喘病监测系统</div>
<div class="cell" style="left:543px;top:595px;letter-spacing:-0.55px;">SJ0000005</div>
<div class="cell" style="left:843px;top:594px;letter-spacing:0.1px;">贵州省-遵义市-播州区-街道158号</div>
<div class="cell" style="left:1143px;top:595px;letter-spacing:-0.26px;">BJ-C-20220607-0000...</div>
<div class="cell" style="left:1293px;top:595px;">1</div>
<div class="cell" style="left:1443px;top:595px;">20</div>
</div>
<div class="hl" style="left:0;top:671px;width:1600px"></div>
<div class="vl" style="left:34px;top:0;width:2px;height:710px"></div>
<div class="vl" style="left:234px;top:0;width:1px;height:710px"></div>
<div class="vl" style="left:384px;top:0;width:1px;height:710px"></div>
<div class="vl" style="left:534px;top:0;width:1px;height:710px"></div>
<div class="vl" style="left:684px;top:0;width:1px;height:710px"></div>
<div class="vl" style="left:834px;top:0;width:1px;height:710px"></div>
<div class="vl" style="left:1134px;top:0;width:1px;height:710px"></div>
<div class="vl" style="left:1284px;top:0;width:1px;height:710px"></div>
<div class="vl" style="left:1434px;top:0;width:1px;height:710px"></div>
<div class="abs" style="left:1452px;top:0;width:137px;height:705px;background:#fff;border-left:1px solid #e0e0e0"></div>
<div class="abs" style="left:1453px;top:0;width:136px;height:68px;background:#f7f8fa"></div>
<div class="hl" style="left:1452px;top:68px;width:140px"></div>
<div class="hc" style="left:1458px;top:24px">操作</div>
<div class="abs" style="left:1453px;top:69px;width:140px;height:602px;overflow:hidden">
<div class="hl" style="left:0;top:38px;width:140px"></div>
<div class="btn" style="left:5px;top:6px"><svg style="left:8px;top:7px" width="14" height="12" viewBox="0 0 14 12"><path d="M3.6 0.7 H10.4 L13.3 6 L10.4 11.3 H3.6 L0.7 6 Z" fill="none" stroke="#fff" stroke-width="1.3" stroke-linejoin="round"/><circle cx="7" cy="6" r="2.3" fill="none" stroke="#fff" stroke-width="1.3"/></svg><div class="t" style="left:29px;top:3px;font-size:14px;font-weight:500">新增产品</div></div>
<div class="more" style="left:103px;top:6px"><svg style="left:6px;top:11px" width="14" height="4" viewBox="0 0 14 4"><circle cx="1.9" cy="2" r="1.45" fill="#555"/><circle cx="7" cy="2" r="1.45" fill="#555"/><circle cx="12.1" cy="2" r="1.45" fill="#555"/></svg></div>
<div class="hl" style="left:0;top:77px;width:140px"></div>
<div class="btn" style="left:5px;top:45px"><svg style="left:8px;top:7px" width="14" height="12" viewBox="0 0 14 12"><path d="M3.6 0.7 H10.4 L13.3 6 L10.4 11.3 H3.6 L0.7 6 Z" fill="none" stroke="#fff" stroke-width="1.3" stroke-linejoin="round"/><circle cx="7" cy="6" r="2.3" fill="none" stroke="#fff" stroke-width="1.3"/></svg><div class="t" style="left:29px;top:3px;font-size:14px;font-weight:500">新增产品</div></div>
<div class="more" style="left:103px;top:45px"><svg style="left:6px;top:11px" width="14" height="4" viewBox="0 0 14 4"><circle cx="1.9" cy="2" r="1.45" fill="#555"/><circle cx="7" cy="2" r="1.45" fill="#555"/><circle cx="12.1" cy="2" r="1.45" fill="#555"/></svg></div>
<div class="hl" style="left:0;top:116px;width:140px"></div>
<div class="btn" style="left:5px;top:84px"><svg style="left:8px;top:7px" width="14" height="12" viewBox="0 0 14 12"><path d="M3.6 0.7 H10.4 L13.3 6 L10.4 11.3 H3.6 L0.7 6 Z" fill="none" stroke="#fff" stroke-width="1.3" stroke-linejoin="round"/><circle cx="7" cy="6" r="2.3" fill="none" stroke="#fff" stroke-width="1.3"/></svg><div class="t" style="left:29px;top:3px;font-size:14px;font-weight:500">新增产品</div></div>
<div class="more" style="left:103px;top:84px"><svg style="left:6px;top:11px" width="14" height="4" viewBox="0 0 14 4"><circle cx="1.9" cy="2" r="1.45" fill="#555"/><circle cx="7" cy="2" r="1.45" fill="#555"/><circle cx="12.1" cy="2" r="1.45" fill="#555"/></svg></div>
<div class="hl" style="left:0;top:155px;width:140px"></div>
<div class="btn" style="left:5px;top:123px"><svg style="left:8px;top:7px" width="14" height="12" viewBox="0 0 14 12"><path d="M3.6 0.7 H10.4 L13.3 6 L10.4 11.3 H3.6 L0.7 6 Z" fill="none" stroke="#fff" stroke-width="1.3" stroke-linejoin="round"/><circle cx="7" cy="6" r="2.3" fill="none" stroke="#fff" stroke-width="1.3"/></svg><div class="t" style="left:29px;top:3px;font-size:14px;font-weight:500">新增产品</div></div>
<div class="more" style="left:103px;top:123px"><svg style="left:6px;top:11px" width="14" height="4" viewBox="0 0 14 4"><circle cx="1.9" cy="2" r="1.45" fill="#555"/><circle cx="7" cy="2" r="1.45" fill="#555"/><circle cx="12.1" cy="2" r="1.45" fill="#555"/></svg></div>
<div class="hl" style="left:0;top:194px;width:140px"></div>
<div class="btn" style="left:5px;top:162px"><svg style="left:8px;top:7px" width="14" height="12" viewBox="0 0 14 12"><path d="M3.6 0.7 H10.4 L13.3 6 L10.4 11.3 H3.6 L0.7 6 Z" fill="none" stroke="#fff" stroke-width="1.3" stroke-linejoin="round"/><circle cx="7" cy="6" r="2.3" fill="none" stroke="#fff" stroke-width="1.3"/></svg><div class="t" style="left:29px;top:3px;font-size:14px;font-weight:500">新增产品</div></div>
<div class="more" style="left:103px;top:162px"><svg style="left:6px;top:11px" width="14" height="4" viewBox="0 0 14 4"><circle cx="1.9" cy="2" r="1.45" fill="#555"/><circle cx="7" cy="2" r="1.45" fill="#555"/><circle cx="12.1" cy="2" r="1.45" fill="#555"/></svg></div>
<div class="hl" style="left:0;top:233px;width:140px"></div>
<div class="btn" style="left:5px;top:201px"><svg style="left:8px;top:7px" width="14" height="12" viewBox="0 0 14 12"><path d="M3.6 0.7 H10.4 L13.3 6 L10.4 11.3 H3.6 L0.7 6 Z" fill="none" stroke="#fff" stroke-width="1.3" stroke-linejoin="round"/><circle cx="7" cy="6" r="2.3" fill="none" stroke="#fff" stroke-width="1.3"/></svg><div class="t" style="left:29px;top:3px;font-size:14px;font-weight:500">新增产品</div></div>
<div class="more" style="left:103px;top:201px"><svg style="left:6px;top:11px" width="14" height="4" viewBox="0 0 14 4"><circle cx="1.9" cy="2" r="1.45" fill="#555"/><circle cx="7" cy="2" r="1.45" fill="#555"/><circle cx="12.1" cy="2" r="1.45" fill="#555"/></svg></div>
<div class="hl" style="left:0;top:272px;width:140px"></div>
<div class="btn" style="left:5px;top:240px"><svg style="left:8px;top:7px" width="14" height="12" viewBox="0 0 14 12"><path d="M3.6 0.7 H10.4 L13.3 6 L10.4 11.3 H3.6 L0.7 6 Z" fill="none" stroke="#fff" stroke-width="1.3" stroke-linejoin="round"/><circle cx="7" cy="6" r="2.3" fill="none" stroke="#fff" stroke-width="1.3"/></svg><div class="t" style="left:29px;top:3px;font-size:14px;font-weight:500">新增产品</div></div>
<div class="more" style="left:103px;top:240px"><svg style="left:6px;top:11px" width="14" height="4" viewBox="0 0 14 4"><circle cx="1.9" cy="2" r="1.45" fill="#555"/><circle cx="7" cy="2" r="1.45" fill="#555"/><circle cx="12.1" cy="2" r="1.45" fill="#555"/></svg></div>
<div class="hl" style="left:0;top:311px;width:140px"></div>
<div class="btn" style="left:5px;top:279px"><svg style="left:8px;top:7px" width="14" height="12" viewBox="0 0 14 12"><path d="M3.6 0.7 H10.4 L13.3 6 L10.4 11.3 H3.6 L0.7 6 Z" fill="none" stroke="#fff" stroke-width="1.3" stroke-linejoin="round"/><circle cx="7" cy="6" r="2.3" fill="none" stroke="#fff" stroke-width="1.3"/></svg><div class="t" style="left:29px;top:3px;font-size:14px;font-weight:500">新增产品</div></div>
<div class="more" style="left:103px;top:279px"><svg style="left:6px;top:11px" width="14" height="4" viewBox="0 0 14 4"><circle cx="1.9" cy="2" r="1.45" fill="#555"/><circle cx="7" cy="2" r="1.45" fill="#555"/><circle cx="12.1" cy="2" r="1.45" fill="#555"/></svg></div>
<div class="hl" style="left:0;top:350px;width:140px"></div>
<div class="btn" style="left:5px;top:318px"><svg style="left:8px;top:7px" width="14" height="12" viewBox="0 0 14 12"><path d="M3.6 0.7 H10.4 L13.3 6 L10.4 11.3 H3.6 L0.7 6 Z" fill="none" stroke="#fff" stroke-width="1.3" stroke-linejoin="round"/><circle cx="7" cy="6" r="2.3" fill="none" stroke="#fff" stroke-width="1.3"/></svg><div class="t" style="left:29px;top:3px;font-size:14px;font-weight:500">新增产品</div></div>
<div class="more" style="left:103px;top:318px"><svg style="left:6px;top:11px" width="14" height="4" viewBox="0 0 14 4"><circle cx="1.9" cy="2" r="1.45" fill="#555"/><circle cx="7" cy="2" r="1.45" fill="#555"/><circle cx="12.1" cy="2" r="1.45" fill="#555"/></svg></div>
<div class="hl" style="left:0;top:389px;width:140px"></div>
<div class="btn dis" style="left:5px;top:357px"><svg style="left:7px;top:6px" width="14" height="12" viewBox="0 0 14 12"><path d="M3.6 0.7 H10.4 L13.3 6 L10.4 11.3 H3.6 L0.7 6 Z" fill="none" stroke="#c4c4c4" stroke-width="1.3" stroke-linejoin="round"/><circle cx="7" cy="6" r="2.3" fill="none" stroke="#c4c4c4" stroke-width="1.3"/></svg><div class="t" style="left:28px;top:2px;font-size:14px;font-weight:500">新增产品</div></div>
<div class="more" style="left:103px;top:357px"><svg style="left:6px;top:11px" width="14" height="4" viewBox="0 0 14 4"><circle cx="1.9" cy="2" r="1.45" fill="#555"/><circle cx="7" cy="2" r="1.45" fill="#555"/><circle cx="12.1" cy="2" r="1.45" fill="#555"/></svg></div>
<div class="hl" style="left:0;top:428px;width:140px"></div>
<div class="btn" style="left:5px;top:396px"><svg style="left:8px;top:7px" width="14" height="12" viewBox="0 0 14 12"><path d="M3.6 0.7 H10.4 L13.3 6 L10.4 11.3 H3.6 L0.7 6 Z" fill="none" stroke="#fff" stroke-width="1.3" stroke-linejoin="round"/><circle cx="7" cy="6" r="2.3" fill="none" stroke="#fff" stroke-width="1.3"/></svg><div class="t" style="left:29px;top:3px;font-size:14px;font-weight:500">新增产品</div></div>
<div class="more" style="left:103px;top:396px"><svg style="left:6px;top:11px" width="14" height="4" viewBox="0 0 14 4"><circle cx="1.9" cy="2" r="1.45" fill="#555"/><circle cx="7" cy="2" r="1.45" fill="#555"/><circle cx="12.1" cy="2" r="1.45" fill="#555"/></svg></div>
<div class="hl" style="left:0;top:467px;width:140px"></div>
<div class="btn" style="left:5px;top:435px"><svg style="left:8px;top:7px" width="14" height="12" viewBox="0 0 14 12"><path d="M3.6 0.7 H10.4 L13.3 6 L10.4 11.3 H3.6 L0.7 6 Z" fill="none" stroke="#fff" stroke-width="1.3" stroke-linejoin="round"/><circle cx="7" cy="6" r="2.3" fill="none" stroke="#fff" stroke-width="1.3"/></svg><div class="t" style="left:29px;top:3px;font-size:14px;font-weight:500">新增产品</div></div>
<div class="more" style="left:103px;top:435px"><svg style="left:6px;top:11px" width="14" height="4" viewBox="0 0 14 4"><circle cx="1.9" cy="2" r="1.45" fill="#555"/><circle cx="7" cy="2" r="1.45" fill="#555"/><circle cx="12.1" cy="2" r="1.45" fill="#555"/></svg></div>
<div class="hl" style="left:0;top:506px;width:140px"></div>
<div class="btn" style="left:5px;top:474px"><svg style="left:8px;top:7px" width="14" height="12" viewBox="0 0 14 12"><path d="M3.6 0.7 H10.4 L13.3 6 L10.4 11.3 H3.6 L0.7 6 Z" fill="none" stroke="#fff" stroke-width="1.3" stroke-linejoin="round"/><circle cx="7" cy="6" r="2.3" fill="none" stroke="#fff" stroke-width="1.3"/></svg><div class="t" style="left:29px;top:3px;font-size:14px;font-weight:500">新增产品</div></div>
<div class="more" style="left:103px;top:474px"><svg style="left:6px;top:11px" width="14" height="4" viewBox="0 0 14 4"><circle cx="1.9" cy="2" r="1.45" fill="#555"/><circle cx="7" cy="2" r="1.45" fill="#555"/><circle cx="12.1" cy="2" r="1.45" fill="#555"/></svg></div>
<div class="hl" style="left:0;top:545px;width:140px"></div>
<div class="btn" style="left:5px;top:513px"><svg style="left:8px;top:7px" width="14" height="12" viewBox="0 0 14 12"><path d="M3.6 0.7 H10.4 L13.3 6 L10.4 11.3 H3.6 L0.7 6 Z" fill="none" stroke="#fff" stroke-width="1.3" stroke-linejoin="round"/><circle cx="7" cy="6" r="2.3" fill="none" stroke="#fff" stroke-width="1.3"/></svg><div class="t" style="left:29px;top:3px;font-size:14px;font-weight:500">新增产品</div></div>
<div class="more" style="left:103px;top:513px"><svg style="left:6px;top:11px" width="14" height="4" viewBox="0 0 14 4"><circle cx="1.9" cy="2" r="1.45" fill="#555"/><circle cx="7" cy="2" r="1.45" fill="#555"/><circle cx="12.1" cy="2" r="1.45" fill="#555"/></svg></div>
<div class="hl" style="left:0;top:584px;width:140px"></div>
<div class="btn" style="left:5px;top:552px"><svg style="left:8px;top:7px" width="14" height="12" viewBox="0 0 14 12"><path d="M3.6 0.7 H10.4 L13.3 6 L10.4 11.3 H3.6 L0.7 6 Z" fill="none" stroke="#fff" stroke-width="1.3" stroke-linejoin="round"/><circle cx="7" cy="6" r="2.3" fill="none" stroke="#fff" stroke-width="1.3"/></svg><div class="t" style="left:29px;top:3px;font-size:14px;font-weight:500">新增产品</div></div>
<div class="more" style="left:103px;top:552px"><svg style="left:6px;top:11px" width="14" height="4" viewBox="0 0 14 4"><circle cx="1.9" cy="2" r="1.45" fill="#555"/><circle cx="7" cy="2" r="1.45" fill="#555"/><circle cx="12.1" cy="2" r="1.45" fill="#555"/></svg></div>
<div class="hl" style="left:0;top:623px;width:140px"></div>
<div class="btn" style="left:5px;top:591px"><svg style="left:8px;top:7px" width="14" height="12" viewBox="0 0 14 12"><path d="M3.6 0.7 H10.4 L13.3 6 L10.4 11.3 H3.6 L0.7 6 Z" fill="none" stroke="#fff" stroke-width="1.3" stroke-linejoin="round"/><circle cx="7" cy="6" r="2.3" fill="none" stroke="#fff" stroke-width="1.3"/></svg><div class="t" style="left:29px;top:3px;font-size:14px;font-weight:500">新增产品</div></div>
<div class="more" style="left:103px;top:591px"><svg style="left:6px;top:11px" width="14" height="4" viewBox="0 0 14 4"><circle cx="1.9" cy="2" r="1.45" fill="#555"/><circle cx="7" cy="2" r="1.45" fill="#555"/><circle cx="12.1" cy="2" r="1.45" fill="#555"/></svg></div>
</div>
<div class="hl" style="left:1452px;top:671px;width:140px"></div>
</div>
<div class="abs" style="left:1883px;top:166px;width:8px;height:587px;background:#b4b4b4;border-radius:4px"></div>
<div class="abs" style="left:293px;top:872px;width:566px;height:8px;background:#b4b4b4;border-radius:4px"></div>
<div class="abs" style="left:300px;top:868px;width:1592px;height:13px;border-bottom:1px solid #e6e6e6;border-right:1px solid #e6e6e6;border-radius:0 0 7px 0"></div>
<div class="abs" style="left:282px;top:891px;width:1609px;height:1px;background:#e4e4e4"></div>
<div class="pg" style="left:292px;top:902px"></div>
<svg style="left:300.5px;top:912px" width="12.5" height="10.4" viewBox="0 0 12.5 10.4" ><path d="M2.5 0.6 V9.8 M0.5 2.6 L2.5 0.6 L4.5 2.6 M0.5 7.8 L2.5 9.8 L4.5 7.8" fill="none" stroke="#333" stroke-width="1"/><path d="M6.6 1.4 H12.5 M6.6 5.2 H12.5 M6.6 9 H12.5" stroke="#444" stroke-width="1.2"/></svg>
<div class="sel" style="left:346px;top:902px;width:150px;height:30px"></div>
<div class="t" style="left:357px;top:907px;font-size:14px;color:#222;">20 条/页</div>
<svg style="left:474px;top:913px" width="12" height="8" viewBox="0 0 12 8" ><path d="M1 1.5 L6 6.5 L11 1.5" fill="none" stroke="#555" stroke-width="1.3"/></svg>
<div class="t" style="left:508px;top:908px;font-size:12px;color:#9c9c9c;">共20条数据</div>
<div class="pg" style="left:1689px;top:902px"></div>
<div class="t" style="left:1700px;top:908px;font-size:14px;color:#222;">1</div>
<div class="t" style="left:1729px;top:908px;font-size:14px;color:#222;">/ 1</div>
<div class="pg" style="left:1766px;top:902px"></div>
<div class="pg" style="left:1798px;top:902px"></div>
<div class="pg" style="left:1830px;top:902px"></div>
<div class="pg" style="left:1862px;top:902px"></div>
<svg style="left:1775px;top:913px" width="12" height="10" viewBox="0 0 12 10" ><path d="M5.5 0.5 L1 5 L5.5 9.5 M11 0.5 L6.5 5 L11 9.5" fill="none" stroke="#8a8f99" stroke-width="1.2"/></svg>
<svg style="left:1810px;top:913px" width="6" height="10" viewBox="0 0 6 10" ><path d="M5.5 0.5 L1 5 L5.5 9.5" fill="none" stroke="#8a8f99" stroke-width="1.2"/></svg>
<svg style="left:1842px;top:913px" width="6" height="10" viewBox="0 0 6 10" ><path d="M0.5 0.5 L5 5 L0.5 9.5" fill="none" stroke="#8a8f99" stroke-width="1.2"/></svg>
<svg style="left:1871px;top:913px" width="12" height="10" viewBox="0 0 12 10" ><path d="M0.5 0.5 L5 5 L0.5 9.5 M6 0.5 L10.5 5 L6 9.5" fill="none" stroke="#8a8f99" stroke-width="1.2"/></svg>
</body></html>
